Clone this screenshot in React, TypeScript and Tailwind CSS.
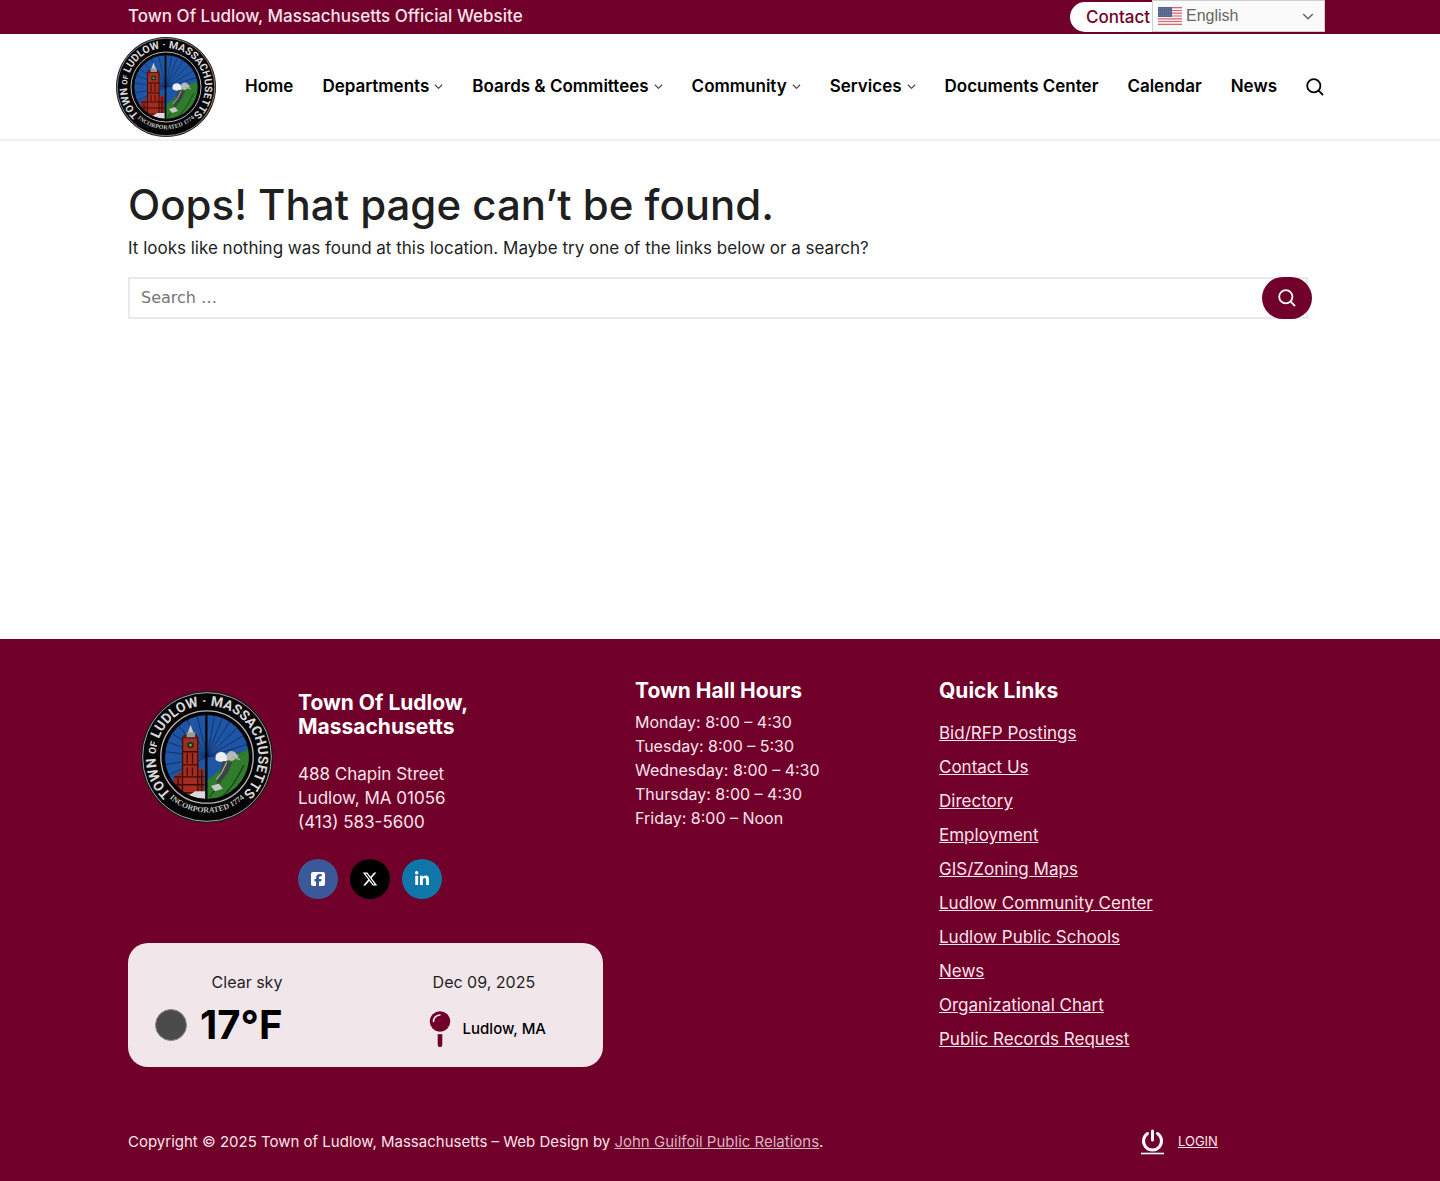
import { useId } from "react";
import { FaSquareFacebook, FaXTwitter, FaLinkedinIn } from "react-icons/fa6";

const navItems = [
  { label: "Home" },
  { label: "Departments", menu: true },
  { label: "Boards & Committees", menu: true },
  { label: "Community", menu: true },
  { label: "Services", menu: true },
  { label: "Documents Center" },
  { label: "Calendar" },
  { label: "News" },
];

const hours = [
  "Monday: 8:00 – 4:30",
  "Tuesday: 8:00 – 5:30",
  "Wednesday: 8:00 – 4:30",
  "Thursday: 8:00 – 4:30",
  "Friday: 8:00 – Noon",
];

const quickLinks = [
  "Bid/RFP Postings",
  "Contact Us",
  "Directory",
  "Employment",
  "GIS/Zoning Maps",
  "Ludlow Community Center",
  "Ludlow Public Schools",
  "News",
  "Organizational Chart",
  "Public Records Request",
];

function Seal({ className }: { className: string }) {
  const id = useId();
  return (
    <svg viewBox="0 0 200 200" className={className} role="img" aria-label="Town of Ludlow seal">
      <defs>
        <clipPath id={`${id}-clip`}>
          <circle cx="100" cy="100" r="64" />
        </clipPath>
        <path id={`${id}-top`} d="M 44 154 A 77.8 77.8 0 1 1 156 154" />
        <path id={`${id}-bottom`} d="M 28 144 A 84.4 84.4 0 0 0 172 144" />
      </defs>
      <circle cx="100" cy="100" r="100" fill="#1b1b1b" />
      <circle cx="100" cy="100" r="97.5" fill="#050505" stroke="#a5a5a5" strokeWidth="1.5" />
      <circle cx="100" cy="100" r="70" fill="#050505" stroke="#b9b9b9" strokeWidth="2" />
      <g clipPath={`url(#${id}-clip)`}>
        <rect x="30" y="30" width="140" height="140" fill="#1f55a5" />
        <g stroke="#0d2a5c" strokeWidth="1.2">
          <path d="M100 100 36 92M100 100 38 76M100 100 44 62M100 100 54 50M100 100 68 40M100 100 84 34M100 100 36 112M100 100 40 128" />
          <path d="M100 100 112 34M100 100 124 38M100 100 136 44M100 100 148 54M100 100 158 66M100 100 164 80M100 100 166 92" />
        </g>
        <path d="M100 166V134C116 128 122 112 134 102 146 92 154 94 168 86V170Z" fill="#2f7d2c" />
        <path d="M104 160C114 150 120 136 130 122M118 164C134 152 144 136 156 112" stroke="#174a18" strokeWidth="2" fill="none" />
        <path d="M50 166V130L66 118H96V166Z" fill="#94261b" />
        <path d="M62 72H87V166H62Z" fill="#a52d20" />
        <path d="M60 72 66 66H84L88 72Z" fill="#5d150e" />
        <path d="M70 66 75 51 81 66Z" fill="#c9c9c4" />
        <path d="M69 63H82V70H69Z" fill="#9a9a96" />
        <g stroke="#3b0d09" strokeWidth="2" fill="none">
          <path d="M63 72V164M86 72V164M62 92H87M62 112H87M50 130H96M52 142H96M56 154H96M70 94V110M78 94V110M70 116V128M78 116V128M92 120V158M56 132V150" />
        </g>
        <circle cx="75" cy="82" r="5" fill="#17351d" />
        <circle cx="75" cy="82" r="2" fill="#8f9c52" />
        <path d="M70 160 82 152H98V164H72Z" fill="#d9d9dd" />
        <path d="M113 98C116 90 128 91 130 98L132 104C126 109 118 108 113 104Z" fill="#eeeeee" />
        <path d="M130 96C136 86 144 92 148 100L138 106 130 104Z" fill="#b8b8b8" />
        <path d="M124 106 138 108 132 124 122 136 112 148 118 128Z" fill="#3b4643" />
        <path d="M106 144 118 140 124 148 112 152Z" fill="#c5c9c4" />
        <path d="M130 108 122 124 114 134M138 100 150 104" stroke="#a4aaa5" strokeWidth="2" fill="none" />
        <path d="M99 34V168" stroke="#070707" strokeWidth="3.5" />
      </g>
      <circle cx="100" cy="100" r="65" fill="none" stroke="#050505" strokeWidth="3" />
      <text fill="#d8d8d8" fontSize="21" className="font-['Liberation_Sans_Narrow','Roboto',sans-serif] font-bold">
        <textPath href={`#${id}-top`} startOffset="50%" textAnchor="middle">
          TOWN <tspan fontSize="15">OF</tspan> LUDLOW · MASSACHUSETTS
        </textPath>
      </text>
      <text fill="#c4c4c4" fontSize="12" className="font-['Liberation_Serif',serif] font-bold">
        <textPath href={`#${id}-bottom`} startOffset="50%" textAnchor="middle">
          INCORPORATED 1774
        </textPath>
      </text>
    </svg>
  );
}

function Chevron({ className }: { className: string }) {
  return (
    <svg viewBox="0 0 10 6" className={className} fill="none" stroke="currentColor" strokeWidth="1.3" aria-hidden="true">
      <path d="M1 .8 5 4.8 9 .8" />
    </svg>
  );
}

function SearchIcon() {
  return (
    <svg viewBox="0 0 18 18" className="size-[18px]" fill="none" stroke="currentColor" strokeWidth="1.8" aria-hidden="true">
      <circle cx="7.8" cy="7.8" r="6.6" />
      <path d="M12.4 12.4 17 17" />
    </svg>
  );
}

function Flag() {
  return (
    <svg viewBox="0 0 24 18" className="pointer-events-none absolute top-[7px] left-[6px] h-[18px] w-6" aria-hidden="true">
      <rect width="24" height="18" fill="#f7eeee" />
      <path d="M0 .7H24M0 3.5H24M0 6.2H24M0 9H24M0 11.8H24M0 14.5H24M0 17.3H24" stroke="#d6656d" strokeWidth="1.2" />
      <rect width="14" height="10" fill="#53668f" />
      <path d="M1 2H13M1 5H13M1 8H13" stroke="#7f8db0" strokeWidth=".7" strokeDasharray="1 1" />
    </svg>
  );
}

export default function App() {
  return (
    <div className="bg-[#fefefe] font-['Inter',sans-serif] text-base text-[#1f1f1f]">
      <div className="bg-[#700029]">
        <div className="relative mx-auto flex h-[34px] max-w-[1248px] items-center justify-between px-8">
          <p className="text-[17px] font-medium text-[#fbe3ec]">Town Of Ludlow, Massachusetts Official Website</p>
          <a href="#contact" className="w-[242px] rounded-full bg-white px-4 text-[17px] leading-[30px] font-medium text-[#700029]">
            Contact
          </a>
          <div className="absolute top-0 right-[19px] w-[173px]">
            <select
              aria-label="Language"
              className="block h-8 w-full appearance-none border border-[#cfcfcf] bg-[#fafafa] pl-[33px] font-['Liberation_Sans',sans-serif] text-base text-[#666]"
            >
              <option>English</option>
            </select>
            <Flag />
            <Chevron className="pointer-events-none absolute top-[13px] right-[11px] w-3 text-[#666]" />
          </div>
        </div>
      </div>

      <header className="border-b-2 border-[#f0f0f0]">
        <div className="mx-auto flex h-[105px] max-w-[1248px] items-center px-5">
          <a href="#home" className="mr-[29px] shrink-0">
            <Seal className="size-[100px]" />
          </a>
          <nav className="flex grow items-center justify-between text-black">
            {navItems.map((item) => (
              <a key={item.label} href="#nav" className="flex items-center gap-[5px] text-[17px] font-semibold whitespace-nowrap">
                {item.label}
                {item.menu && <Chevron className="w-[9px] text-[#444]" />}
              </a>
            ))}
            <button type="button" aria-label="Search">
              <SearchIcon />
            </button>
          </nav>
        </div>
      </header>

      <main className="mx-auto min-h-[498px] max-w-[1248px] px-8 pt-10">
        <h1 className="text-[42px] leading-[48px] font-medium">Oops! That page can’t be found.</h1>
        <p className="mt-[7px] text-[17px] leading-6">It looks like nothing was found at this location. Maybe try one of the links below or a search?</p>
        <form className="mt-[17px] flex">
          <input
            type="search"
            aria-label="Search"
            placeholder="Search …"
            className="-mr-[46px] h-[42px] min-w-0 grow border-2 border-[#eaeaea] px-[11px] pb-[2px] font-['DejaVu_Sans',sans-serif] placeholder:text-[#757575]"
          />
          <button type="button" aria-label="Submit search" className="flex h-[42px] w-[50px] items-center justify-center rounded-[21px] bg-[#700029] text-white">
            <SearchIcon />
          </button>
        </form>
      </main>

      <footer className="bg-[#700029] text-[#fbe3ec]">
        <div className="mx-auto max-w-[1248px] px-8 pt-10 pb-[26px]">
          <div className="grid grid-cols-[475fr_272fr_373fr] gap-8">
            <div>
              <div className="flex gap-[25px] pt-3 pl-[13px]">
                <Seal className="size-[132px] shrink-0" />
                <div>
                  <h2 className="text-[21px] leading-6 font-bold text-white">
                    Town Of Ludlow,
                    <br />
                    Massachusetts
                  </h2>
                  <p className="mt-[23px] text-[17px] leading-6">
                    488 Chapin Street
                    <br />
                    Ludlow, MA 01056
                    <br />
                    (413) 583-5600
                  </p>
                  <div className="mt-[25px] flex gap-3 text-white">
                    <a href="#facebook" aria-label="Facebook" className="flex size-10 items-center justify-center rounded-full bg-[#3b5998]">
                      <FaSquareFacebook size={16} />
                    </a>
                    <a href="#x" aria-label="X" className="flex size-10 items-center justify-center rounded-full bg-black">
                      <FaXTwitter size={16} />
                    </a>
                    <a href="#linkedin" aria-label="LinkedIn" className="flex size-10 items-center justify-center rounded-full bg-[#0e76a8]">
                      <FaLinkedinIn size={16} />
                    </a>
                  </div>
                </div>
              </div>

              <section className="mt-11 flex h-[124px] justify-between rounded-[20px] bg-[#f1e6ea] pt-[27px] pr-[57px] pl-[27px] text-[#1f1f1f]">
                <div>
                  <p className="text-right leading-6">Clear sky</p>
                  <div className="flex items-center gap-[13px]">
                    <span className="size-8 rounded-full border border-[#8a8588] bg-[#4b4b4b]" />
                    <p className="text-[40px] leading-[62px] font-bold text-black">17°F</p>
                  </div>
                </div>
                <div>
                  <p className="pl-1 leading-6">Dec 09, 2025</p>
                  <div className="mt-[17px] flex items-center gap-3">
                    <svg viewBox="0 0 22 36" className="h-9 w-[22px]" aria-hidden="true">
                      <circle cx="11" cy="10.5" r="10.2" fill="#700029" />
                      <path d="M4.5 10.5A6.5 6.5 0 0 1 11 4" fill="none" stroke="#f1e6ea" strokeWidth="1.6" strokeLinecap="round" />
                      <path d="M8.7 23q2.3.5 4.6 0V34l-1 2H9.7l-1-2Z" fill="#700029" />
                    </svg>
                    <p className="text-[15px] font-medium text-black">Ludlow, MA</p>
                  </div>
                </div>
              </section>
            </div>

            <div>
              <h2 className="text-[21px] leading-6 font-bold text-white">Town Hall Hours</h2>
              <ul className="mt-[7px] leading-6">
                {hours.map((line) => (
                  <li key={line}>{line}</li>
                ))}
              </ul>
            </div>

            <div>
              <h2 className="text-[21px] leading-6 font-bold text-white">Quick Links</h2>
              <ul className="mt-[13px] text-[17px] leading-[34px]">
                {quickLinks.map((link) => (
                  <li key={link}>
                    <a href="#link" className="underline">
                      {link}
                    </a>
                  </li>
                ))}
              </ul>
            </div>
          </div>

          <div className="mt-[62px] grid grid-cols-[1013fr_171fr] items-center">
            <p className="text-[15px]">
              Copyright © 2025 Town of Ludlow, Massachusetts – Web Design by{" "}
              <a href="#design" className="text-[#d9b3c2] underline">
                John Guilfoil Public Relations
              </a>
              .
            </p>
            <div className="flex items-center gap-[14px]">
              <a href="#login" aria-label="Log in">
                <svg viewBox="0 0 23 26" className="h-[26px] w-[23px]" fill="none" stroke="#fff" aria-hidden="true">
                  <path d="M6.5 4.5A9 9 0 1 0 16.5 4.5" strokeWidth="3" strokeLinecap="round" />
                  <path d="M11.5 2V11" strokeWidth="3" strokeLinecap="round" />
                  <path d="M0 24.5H23" strokeWidth="1.6" />
                </svg>
              </a>
              <a href="#login" className="text-[13px] underline">
                LOGIN
              </a>
            </div>
          </div>
        </div>
      </footer>
    </div>
  );
}
